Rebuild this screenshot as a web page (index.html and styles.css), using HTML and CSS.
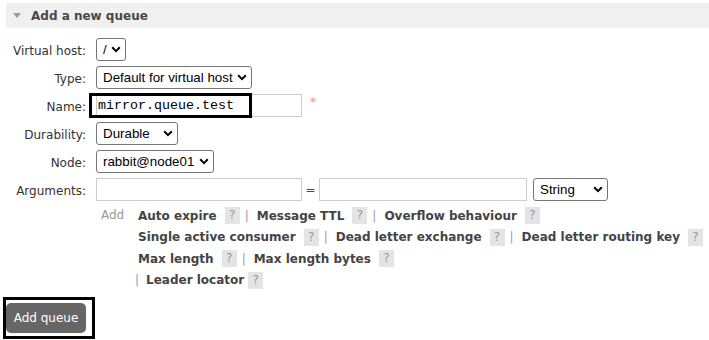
FILE: index.html
```html
<!DOCTYPE html>
<html lang="en">
<head>
    <title>Add a new queue</title>
    <link rel="stylesheet" href="styles.css">
</head>
<body>
    <div class="section">
        <h2 class="section-title"><span class="arrow"></span>Add a new queue</h2>

        <div class="form">
            <label class="form-label">Virtual host:</label>
            <div class="form-field">
                <select class="sel sel-vhost"><option>/</option></select>
            </div>

            <label class="form-label">Type:</label>
            <div class="form-field">
                <select class="sel sel-type"><option>Default for virtual host</option></select>
            </div>

            <label class="form-label">Name:</label>
            <div class="form-field name-field">
                <input class="txt txt-name" type="text" value="mirror.queue.test">
                <span class="mand">*</span>
                <span class="mark mark-name"></span>
            </div>

            <label class="form-label">Durability:</label>
            <div class="form-field">
                <select class="sel sel-durable"><option>Durable</option></select>
            </div>

            <label class="form-label">Node:</label>
            <div class="form-field">
                <select class="sel sel-node"><option>rabbit@node01</option></select>
            </div>

            <label class="form-label">Arguments:</label>
            <div class="form-field">
                <input class="txt txt-key" type="text">
                <span class="equals">=</span>
                <input class="txt txt-value" type="text">
                <select class="sel sel-argtype"><option>String</option></select>
            </div>

            <div class="form-label"></div>
            <div class="arg-links">
                <span class="add-label">Add</span>
                <div class="link-lines">
                    <div class="link-line">
                        <span class="link">Auto expire</span><span class="help">?</span><span class="sep">|</span>
                        <span class="link">Message TTL</span><span class="help">?</span><span class="sep">|</span>
                        <span class="link">Overflow behaviour</span><span class="help">?</span>
                    </div>
                    <div class="link-line">
                        <span class="link">Single active consumer</span><span class="help">?</span><span class="sep">|</span>
                        <span class="link">Dead letter exchange</span><span class="help">?</span><span class="sep">|</span>
                        <span class="link">Dead letter routing key</span><span class="help">?</span>
                    </div>
                    <div class="link-line">
                        <span class="link">Max length</span><span class="help">?</span><span class="sep">|</span>
                        <span class="link">Max length bytes</span><span class="help">?</span>
                    </div>
                    <div class="link-line link-line-last">
                        <span class="sep sep-lead">|</span>
                        <span class="link">Leader locator</span><span class="help help-tight">?</span>
                    </div>
                </div>
            </div>
        </div>

        <div class="submit-row">
            <button class="btn" type="button">Add queue</button>
        </div>
    </div>
</body>
</html>
```

FILE: styles.css
```css
body {
    margin: 0;
    font-family: "DejaVu Sans", Verdana, sans-serif;
    font-size: 12px;
    color: #484848;
    background: #fff;
}

.section {
    padding: 3px 0 0 6px;
}

.section-title {
    display: flex;
    align-items: center;
    height: 25px;
    margin: 0;
    padding-left: 7px;
    background-color: #f0f0f0;
    font-size: 12px;
    font-weight: bold;
    color: #484848;
}

.arrow {
    width: 0;
    height: 0;
    margin-right: 10px;
    border-left: 4.5px solid transparent;
    border-right: 4.5px solid transparent;
    border-top: 5px solid #999;
}

.form {
    display: grid;
    grid-template-columns: 80px 1fr;
    column-gap: 10px;
    row-gap: 5px;
    margin-top: 10px;
}

.form-label {
    display: flex;
    align-items: center;
    justify-content: flex-end;
    height: 23px;
    padding-top: 3px;
    box-sizing: border-box;
    color: #333;
}

.form-field {
    display: flex;
    align-items: center;
    height: 23px;
}

.name-field {
    position: relative;
}

.sel {
    appearance: none;
    -webkit-appearance: none;
    height: 23px;
    margin: 0;
    padding: 0 0 0 6px;
    border: 1px solid #767676;
    border-radius: 3px;
    background: #fff url("data:image/svg+xml,%3Csvg xmlns='http://www.w3.org/2000/svg' width='10' height='7' viewBox='0 0 10 7'%3E%3Cpath d='M1.2 1.3 L5 5.1 L8.8 1.3' fill='none' stroke='%23000' stroke-width='2'/%3E%3C/svg%3E") no-repeat right 4px center;
    font-family: "Liberation Sans", Arial, sans-serif;
    font-size: 13.33px;
    color: #000;
}

.sel-vhost { width: 30px; }
.sel-type { width: 156px; }
.sel-durable { width: 82px; }
.sel-node { width: 118px; }
.sel-argtype { width: 75px; margin-left: 6px; }

.txt {
    height: 23px;
    margin: 0;
    padding: 0 2px 0 1px;
    box-sizing: border-box;
    border: 1px solid #ccc;
    font-family: "Liberation Mono", "Courier New", monospace;
    font-size: 13.33px;
    color: #000;
    outline: none;
}

.txt-name,
.txt-key { width: 206px; }
.txt-value { width: 208px; }

.equals {
    width: 17px;
    text-align: center;
    color: #484848;
}

.mand {
    align-self: flex-start;
    margin: 1px 0 0 8px;
    color: #f88;
    font-size: 12px;
}

.mark {
    position: absolute;
    border: 3px solid #000;
    box-sizing: border-box;
    pointer-events: none;
}

.mark-name {
    left: -7px;
    top: -1px;
    width: 163px;
    height: 25px;
}

.arg-links {
    display: flex;
    align-items: flex-start;
    padding-top: 1px;
}

.add-label {
    width: 23px;
    margin: 0 14px 0 5px;
    color: #999;
    line-height: 17px;
}

.link-lines {
    display: flex;
    flex-direction: column;
    gap: 4.5px;
}

.link-line {
    display: flex;
    align-items: center;
    height: 17px;
    white-space: nowrap;
}

.link-line-last {
    margin-left: -3px;
}

.link {
    font-weight: bold;
    color: #444;
}

.help {
    width: 15px;
    height: 17px;
    margin-left: 8px;
    background-color: #e4e4e4;
    color: #999;
    line-height: 17px;
    text-align: center;
}

.help-tight {
    margin-left: 4px;
}

.sep {
    margin: 0 8px 0 5px;
    color: #99a;
}

.sep-lead {
    margin: 0 7px 0 0;
}

/* black outline drawn round the submit button */
.submit-row {
    display: inline-flex;
    margin: 8px 0 0 -3px;
    padding: 3px 6px 3px 0;
    border: 3px solid #000;
}

.btn {
    width: 80px;
    height: 30px;
    padding: 0;
    border: none;
    border-radius: 5px;
    background-color: #666;
    color: #fff;
    font-family: "DejaVu Sans", Verdana, sans-serif;
    font-size: 12px;
}
```
